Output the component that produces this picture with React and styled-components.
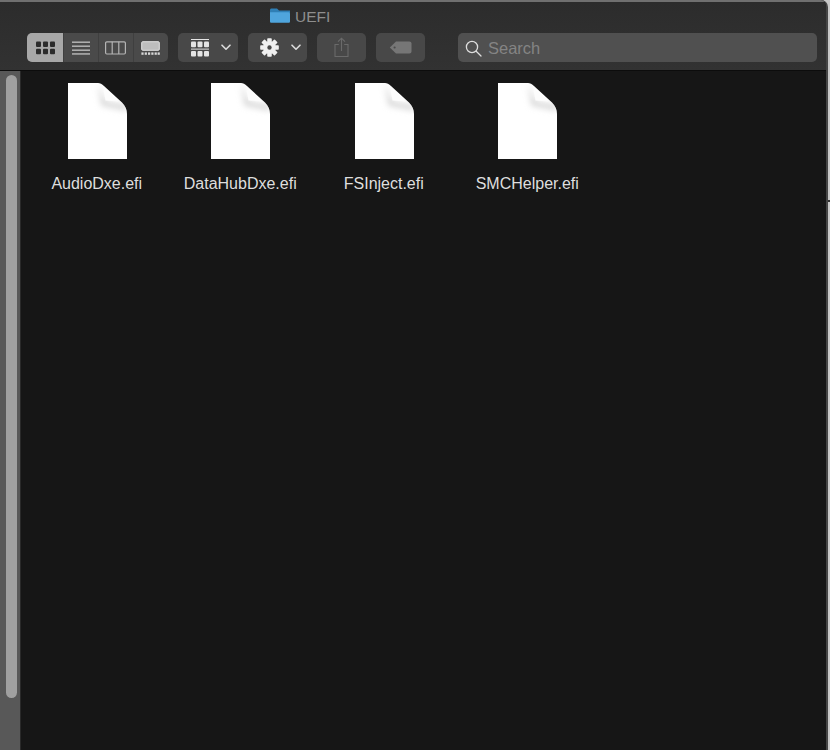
import React from "react";
import styled, { createGlobalStyle } from "styled-components";

const files = ["AudioDxe.efi", "DataHubDxe.efi", "FSInject.efi", "SMCHelper.efi"];

function ViewIcon({ type }) {
  if (type === "icons") {
    return (
      <svg width="19" height="14" viewBox="0 0 19 14" fill="#2c2c2c">
        {[0, 7, 14].map((x) => (
          <g key={x}>
            <rect x={x} y="0.5" width="5" height="5.5" rx="1" />
            <rect x={x} y="7.8" width="5" height="5.5" rx="1" />
          </g>
        ))}
      </svg>
    );
  }
  if (type === "list") {
    return (
      <svg width="18" height="14" viewBox="0 0 18 14" fill="#d8d8d8">
        {[0.6, 4.6, 8.6, 12.4].map((y) => (
          <rect key={y} x="0" y={y} width="18" height="1.1" />
        ))}
      </svg>
    );
  }
  if (type === "columns") {
    return (
      <svg width="21" height="14" viewBox="0 0 21 14" fill="none" stroke="#b4b4b4" strokeWidth="1.2">
        <rect x="0.6" y="0.8" width="19.8" height="12.2" rx="1.2" />
        <path d="M7.2 0.8V13M13.8 0.8V13" />
      </svg>
    );
  }
  return (
    <svg width="19" height="14" viewBox="0 0 19 14">
      <rect x="0.7" y="0.7" width="17.6" height="8.6" rx="1" fill="#bdbdbd" stroke="#e2e2e2" strokeWidth="1" />
      {[0.4, 3.7, 7, 10.3, 13.6, 16.6].map((x) => (
        <rect key={x} x={x} y="11.4" width="2.2" height="2.4" fill="#d8d8d8" />
      ))}
    </svg>
  );
}

function ArrangeIcon() {
  return (
    <svg width="18" height="18" viewBox="0 0 18 18" fill="#e4e4e4">
      <rect x="0" y="0" width="18" height="1" />
      <rect x="0" y="9.6" width="18" height="1" />
      {[0, 6.5, 13].map((x) => (
        <g key={x}>
          <rect x={x} y="2.6" width="5" height="5.6" rx="1" />
          <rect x={x} y="12" width="5" height="5.6" rx="1" />
        </g>
      ))}
    </svg>
  );
}

function GearIcon() {
  return (
    <svg width="19" height="19" viewBox="0 0 20 20" fill="#efefef">
      {[0, 45, 90, 135].map((r) => (
        <rect key={r} x="7.6" y="0.2" width="4.8" height="19.6" rx="0.8" transform={`rotate(${r} 10 10)`} />
      ))}
      <circle cx="10" cy="10" r="6.6" />
      <circle cx="10" cy="10" r="2.3" fill="#484848" />
    </svg>
  );
}

function Chevron() {
  return (
    <svg width="10" height="7" viewBox="0 0 10 7" fill="none" stroke="#dcdcdc" strokeWidth="1.6" strokeLinecap="round" strokeLinejoin="round">
      <path d="M1 1.2L5 5.2L9 1.2" />
    </svg>
  );
}

function ShareIcon() {
  return (
    <svg width="15" height="21" viewBox="0 0 15 21" fill="none" stroke="#6a6a6a" strokeWidth="1.1">
      <path d="M4.8 7.5H1V19.5H14V7.5H10.2" />
      <path d="M7.5 14V1.2M4 4.6L7.5 1.2L11 4.6" />
    </svg>
  );
}

function TagIcon() {
  return (
    <svg width="23" height="13" viewBox="0 0 23 13">
      <path
        d="M7 0.5H20.5C21.6 0.5 22.5 1.4 22.5 2.5V10.5C22.5 11.6 21.6 12.5 20.5 12.5H7L0.8 6.5Z"
        fill="#767676"
      />
      <circle cx="5.6" cy="6.5" r="1.1" fill="#4a4a4a" />
    </svg>
  );
}

function SearchIcon() {
  return (
    <svg width="17" height="17" viewBox="0 0 17 17" fill="none" stroke="#dedede" strokeWidth="1.3" strokeLinecap="round">
      <circle cx="7" cy="7" r="5.6" />
      <path d="M11.2 11.2L16 16" />
    </svg>
  );
}

function FolderIcon() {
  return (
    <svg width="20" height="15" viewBox="0 0 20 15">
      <path d="M0 2C0 1 .6.4 1.5.4H7L9 2.4H20V5H0Z" fill="#2f7fb5" />
      <path d="M0 4.2H18.6C19.4 4.2 20 4.8 20 5.6V13.4C20 14.2 19.4 14.8 18.6 14.8H1.4C.6 14.8 0 14.2 0 13.4Z" fill="#4fa5dd" />
    </svg>
  );
}

const sheet = "M0 0H30C32 0 34 1 36 3L54 19.5C57.5 23 59 26.5 59 31V76H0Z";

function FileIcon() {
  return (
    <svg width="60" height="76" viewBox="-1 0 60 76">
      <defs>
        <clipPath id="sheet">
          <path d={sheet} />
        </clipPath>
        <filter id="soft" x="-50%" y="-50%" width="200%" height="200%">
          <feGaussianBlur stdDeviation="3" />
        </filter>
      </defs>
      <path d={sheet} fill="#ffffff" />
      <g clipPath="url(#sheet)">
        <path d="M30 0L37 19L59 23V27L34 22Z" fill="#c6c6c6" filter="url(#soft)" />
      </g>
      <path d="M35 4L37.5 17.5L50.5 18.5Z" fill="#fcfcfc" />
    </svg>
  );
}

export default function App() {
  return (
    <>
      <GlobalStyle />
      <Page>
        <Win>
          <TitleBar>
            <Title>
              <FolderIcon />
              <span>UEFI</span>
            </Title>
            <Toolbar>
              <Segmented>
                {["icons", "list", "columns", "gallery"].map((t, i) => (
                  <Segment key={t} $active={i === 0} $width={i === 0 ? 37 : i === 1 ? 34 : 35}>
                    <ViewIcon type={t} />
                  </Segment>
                ))}
              </Segmented>
              <MenuButton $width={60} $inset={13}>
                <ArrangeIcon />
                <Chevron />
              </MenuButton>
              <MenuButton $width={59} $inset={12}>
                <GearIcon />
                <Chevron />
              </MenuButton>
              <ToolButton>
                <ShareIcon />
              </ToolButton>
              <ToolButton>
                <TagIcon />
              </ToolButton>
              <SearchField>
                <SearchIcon />
                <span>Search</span>
              </SearchField>
            </Toolbar>
          </TitleBar>
          <Body>
            <Track>
              <Thumb />
            </Track>
            <Grid>
              {files.map((name) => (
                <FileItem key={name}>
                  <FileIcon />
                  <FileName>{name}</FileName>
                </FileItem>
              ))}
            </Grid>
          </Body>
        </Win>
        <EdgeTick />
      </Page>
    </>
  );
}

const GlobalStyle = createGlobalStyle`
  html, body {
    margin: 0;
    padding: 0;
    background: #c8c8c8;
    overflow: hidden;
  }
`;

const Page = styled.div`
  position: relative;
  width: 830px;
  height: 750px;
  font-family: "Liberation Sans", Arial, sans-serif;
`;

const Win = styled.div`
  width: 828px;
  height: 750px;
  box-sizing: border-box;
  display: flex;
  flex-direction: column;
  border-top-right-radius: 7px;
  border-right: 2px solid #454545;
  overflow: hidden;
  background: #161616;
`;

const EdgeTick = styled.div`
  position: absolute;
  left: 828px;
  top: 200px;
  width: 2px;
  height: 2px;
  background: #333333;
`;

const TitleBar = styled.div`
  height: 71px;
  box-sizing: border-box;
  background: linear-gradient(#2c2c2c, #323232);
  border-top: 2px solid #707070;
  border-bottom: 1px solid #0c0c0c;
`;

const Title = styled.div`
  height: 31px;
  display: flex;
  align-items: flex-start;
  gap: 5px;
  padding: 6px 0 0 270px;
  box-sizing: border-box;
  color: #8e8e8e;
  font-size: 15.5px;
  line-height: 18px;
`;

const Toolbar = styled.div`
  display: flex;
  height: 29px;
  padding-left: 27px;
  gap: 10px;
`;

const Segmented = styled.div`
  display: flex;
  width: 141px;
  height: 29px;
  border-radius: 5px;
  overflow: hidden;
  background: #4a4a4a;
`;

const Segment = styled.div`
  width: ${(p) => p.$width}px;
  display: flex;
  align-items: center;
  justify-content: center;
  background: ${(p) => (p.$active ? "#a8a8a8" : "transparent")};
  border-right: 1px solid #3f3f3f;
  &:last-child {
    border-right: none;
  }
`;

const MenuButton = styled.div`
  width: ${(p) => p.$width}px;
  height: 29px;
  box-sizing: border-box;
  padding-left: ${(p) => p.$inset}px;
  display: flex;
  align-items: center;
  gap: 12px;
  border-radius: 5px;
  background: #484848;
`;

const ToolButton = styled.div`
  width: 49px;
  height: 29px;
  display: flex;
  align-items: center;
  justify-content: center;
  border-radius: 5px;
  background: #484848;
`;

const SearchField = styled.div`
  width: 359px;
  height: 29px;
  margin-left: 23px;
  display: flex;
  align-items: center;
  gap: 6px;
  padding: 1px 0 0 7px;
  box-sizing: border-box;
  border-radius: 5px;
  background: #505050;
  color: #848484;
  font-size: 16.5px;
`;

const Body = styled.div`
  flex: 1;
  display: flex;
`;

const Track = styled.div`
  width: 21px;
  box-sizing: border-box;
  padding: 4px 4px 0 6px;
  background: #585858;
  border-right: 1px solid #2a2a2a;
`;

const Thumb = styled.div`
  width: 11px;
  height: 623px;
  border-radius: 6px;
  background: #a0a0a0;
`;

const Grid = styled.div`
  display: flex;
  padding: 12px 0 0 4px;
`;

const FileItem = styled.div`
  width: 143.5px;
  display: flex;
  flex-direction: column;
  align-items: center;
`;

const FileName = styled.div`
  margin-top: 16px;
  color: #dedede;
  font-size: 16px;
  line-height: 18px;
  white-space: nowrap;
`;
